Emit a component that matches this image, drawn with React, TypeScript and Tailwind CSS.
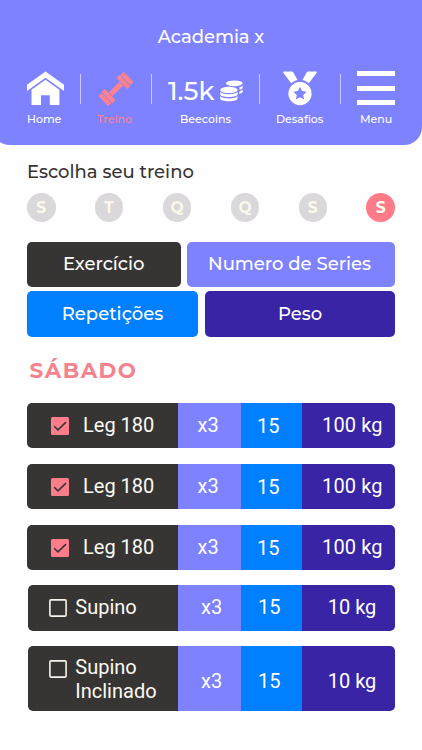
const label = "text-[11px] leading-[14px] font-medium whitespace-nowrap";

function Divider() {
  return <div className="mt-[3px] h-[30px] w-px shrink-0 bg-[#c9cbff]" />;
}

function HomeIcon() {
  return (
    <svg className="block h-[35px] w-[37px]" viewBox="0 0 37 35" fill="#fff">
      <path d="M18.5 .6 37 13.8V20L18.5 6.8 0 20V13.8Z" />
      <path d="M18.5 8.8 32.4 18.7V34H22.8V24.3H14V34H4.5V18.7Z" />
    </svg>
  );
}

function DumbbellIcon() {
  return (
    <svg className="block h-[35px] w-[38px]" viewBox="0 0 38 35" fill="#fd818f">
      <g transform="translate(19 18) rotate(-43.5)">
        <rect x="-7.4" y="-2.6" width="14.8" height="5.2" />
        <rect x="-12.5" y="-7.8" width="4.5" height="15.6" rx=".8" />
        <rect x="-17.6" y="-7" width="4.5" height="14" rx=".8" />
        <rect x="8" y="-7.8" width="4.5" height="15.6" rx=".8" />
        <rect x="13.1" y="-7" width="4.5" height="14" rx=".8" />
      </g>
    </svg>
  );
}

function CoinsIcon() {
  return (
    <svg className="block h-[22px] w-[23px] shrink-0" viewBox="0 0 23 22" fill="#fff">
      <ellipse cx="14.3" cy="3.3" rx="8.4" ry="2.9" />
      <path d="M19.3 7.3c1.5-.4 2.6-.9 3.4-1.6v1.8c0 1.1-1.2 1.9-3 2.4-.1-1-.2-1.8-.4-2.6Z" />
      <path d="M19.3 11.4c1.5-.4 2.6-.9 3.4-1.6v1.8c0 1.1-1.4 2-3.4 2.5Z" />
      <ellipse cx="8.9" cy="9.9" rx="8.7" ry="3.2" />
      <path d="M.2 12.1c1.7 1.5 5 2.2 8.7 2.2s7-.7 8.7-2.2v2.1c0 1.7-3.9 2.8-8.7 2.8S.2 15.9.2 14.2Z" />
      <path d="M.2 16.3c1.7 1.5 5 2.2 8.7 2.2s7-.7 8.7-2.2v2.1c0 1.7-3.9 2.8-8.7 2.8S.2 20.1.2 18.4Z" />
    </svg>
  );
}

function MedalIcon() {
  return (
    <svg className="mx-auto block h-[35px] w-[34px]" viewBox="0 0 34 35" fill="#fff">
      <path d="M1 .4h7.6c.7 0 1.2.3 1.6.9l4.3 7.6c-2.5.5-4.7 1.6-6.3 3.3L.3 1.7C-.1 1 .2.4 1 .4Z" />
      <path d="M33 .4h-7.6c-.7 0-1.2.3-1.6.9l-4.3 7.6c2.5.5 4.7 1.6 6.3 3.3L33.7 1.7c.4-.7.1-1.3-.7-1.3Z" />
      <circle cx="17" cy="22.6" r="11.6" />
      <path
        fill="#7e82ff"
        d="m17 15.8 2 4.3 4.7.6-3.5 3.2.9 4.7-4.1-2.3-4.1 2.3.9-4.7-3.5-3.2 4.7-.6Z"
      />
    </svg>
  );
}

function Header() {
  return (
    <header className="-ml-2 h-[145px] w-[430px] rounded-b-[18px] bg-[#7e82ff] pl-2 text-white">
      <h1 className="pt-[25px] text-center text-[18px] leading-6 font-medium tracking-[-0.05px]">Academia x</h1>
      <nav className="flex gap-4 pt-[22px] pl-[27px]">
        <div className="w-[37px]">
          <HomeIcon />
          <div className={`${label} mt-[6px]`}>Home</div>
        </div>
        <Divider />
        <div className="w-[38px]">
          <DumbbellIcon />
          <div className={`${label} mt-[6px] text-[#fd818f]`}>Treino</div>
        </div>
        <Divider />
        <div className="w-[75px]">
          <div className="flex h-[35px] items-center justify-between pt-[4px]">
            <span className="text-[26px] leading-[30px] font-medium">1.5k</span>
            <CoinsIcon />
          </div>
          <div className={`${label} mt-[6px] text-center`}>Beecoins</div>
        </div>
        <Divider />
        <div className="w-[48px]">
          <MedalIcon />
          <div className={`${label} mt-[6px]`}>Desafios</div>
        </div>
        <Divider />
        <div className="w-[38px]">
          <div className="flex h-[35px] flex-col justify-between pb-px">
            <div className="h-[5px] bg-white" />
            <div className="h-[5px] bg-white" />
            <div className="h-[5px] bg-white" />
          </div>
          <div className={`${label} mt-[6px] text-center`}>Menu</div>
        </div>
      </nav>
    </header>
  );
}

function Days() {
  return (
    <div className="mt-[9px] flex justify-between">
      {["S", "T", "Q", "Q", "S", "S"].map((day, i) => (
        <div
          key={i}
          className={`flex size-[28.5px] items-center justify-center rounded-full text-[15.5px] font-bold ${
            i === 5 ? "bg-[#ff7b8a] text-[#fffdf0]" : "bg-[#dad8da] text-[#fbf9ec]"
          }`}
        >
          {day}
        </div>
      ))}
    </div>
  );
}

function Legend() {
  const box = "flex items-center justify-center rounded-[5px] text-[18px] font-medium text-white whitespace-nowrap";
  return (
    <div className="mt-5 flex flex-col gap-1 text-white">
      <div className="flex h-[45.5px] justify-between">
        <div className={`${box} w-[153.5px] bg-[#373533]`}>Exercício</div>
        <div className={`${box} w-[208px] bg-[#7e82ff] pr-[3px]`}>Numero de Series</div>
      </div>
      <div className="flex h-[46px] justify-between">
        <div className={`${box} w-[171px] bg-[#0080ff]`}>Repetições</div>
        <div className={`${box} w-[190px] bg-[#3824a5]`}>Peso</div>
      </div>
    </div>
  );
}

function Checkbox({ checked }: { checked: boolean }) {
  return checked ? (
    <svg className="block h-[18px] w-[18px] shrink-0" viewBox="0 0 18 18">
      <rect width="18" height="18" rx="1.5" fill="#fd7d8b" />
      <path d="m3.2 9.2 3.8 3.7 8-7.8" fill="none" stroke="#373533" strokeWidth="1.6" />
    </svg>
  ) : (
    <svg className="block h-[18px] w-[18px] shrink-0" viewBox="0 0 18 18">
      <rect x=".9" y=".9" width="16.2" height="16.2" rx="1" fill="none" stroke="#f8f4ec" strokeWidth="1.6" />
    </svg>
  );
}

type Exercise = { name: string; lines: string[]; done: boolean; weight: string };

const exercises: Exercise[] = [
  { name: "leg-1", lines: ["Leg 180"], done: true, weight: "100 kg" },
  { name: "leg-2", lines: ["Leg 180"], done: true, weight: "100 kg" },
  { name: "leg-3", lines: ["Leg 180"], done: true, weight: "100 kg" },
  { name: "supino", lines: ["Supino"], done: false, weight: "10 kg" },
  { name: "supino-inclinado", lines: ["Supino", "Inclinado"], done: false, weight: "10 kg" },
];

function Row({ item }: { item: Exercise }) {
  const tall = item.lines.length > 1;
  const pad = tall ? "pt-[23px]" : item.done ? "pt-[10px]" : "pt-[9.2px]";
  return (
    <div
      className={`flex overflow-hidden rounded-[5px] font-[Roboto,sans-serif] text-[20px] leading-6 text-white ${
        tall ? "h-[65px]" : "h-[45.4px]"
      } ${item.done ? "" : "ml-[0.7px]"}`}
    >
      <div
        className={`flex flex-1 bg-[#373533] text-[#fdfaf4] ${
          item.done ? "gap-[14px] pt-[10px] pl-[24px]" : "gap-[8.3px] pt-[9.2px] pl-[21.3px]"
        }`}
      >
        <div className={item.done ? "pt-[4px]" : "pt-[4.5px]"}>
          <Checkbox checked={item.done} />
        </div>
        <div>
          {item.lines.map((line) => (
            <div key={line}>{line}</div>
          ))}
        </div>
      </div>
      <div className={`w-[63.3px] bg-[#7e82ff] ${pad} ${item.done ? "pl-[19.5px]" : "pl-[23px]"}`}>x3</div>
      <div
        className={`w-[60.7px] bg-[#0080ff] ${tall ? "pt-[23px]" : item.done ? "pt-[11px]" : "pt-[9.2px]"} ${
          item.done ? "pl-[15.7px]" : "pl-[16.7px]"
        }`}
      >
        15
      </div>
      <div className={`w-[93px] bg-[#3824a5] ${item.done ? "tracking-[0.15px]" : ""} ${pad} ${item.done ? "pl-[20px]" : "pl-[25.7px]"}`}>
        {item.weight}
      </div>
    </div>
  );
}

export default function App() {
  return (
    <div className="h-[750px] w-[422px] overflow-hidden bg-[#fefefe] font-[Montserrat,Inter,sans-serif]">
      <Header />
      <main className="px-[27px] pt-[15px]">
        <p className="text-[18px] leading-6 font-medium text-[#373533]">Escolha seu treino</p>
        <Days />
        <Legend />
        <h2 className="mt-[19px] pl-[2.5px] text-[21.5px] leading-7 font-bold tracking-[1.5px] text-[#f5838f]">SÁBADO</h2>
        <div className="mt-[19px] flex flex-col gap-[15.4px]">
          {exercises.map((item) => (
            <Row key={item.name} item={item} />
          ))}
        </div>
      </main>
    </div>
  );
}
